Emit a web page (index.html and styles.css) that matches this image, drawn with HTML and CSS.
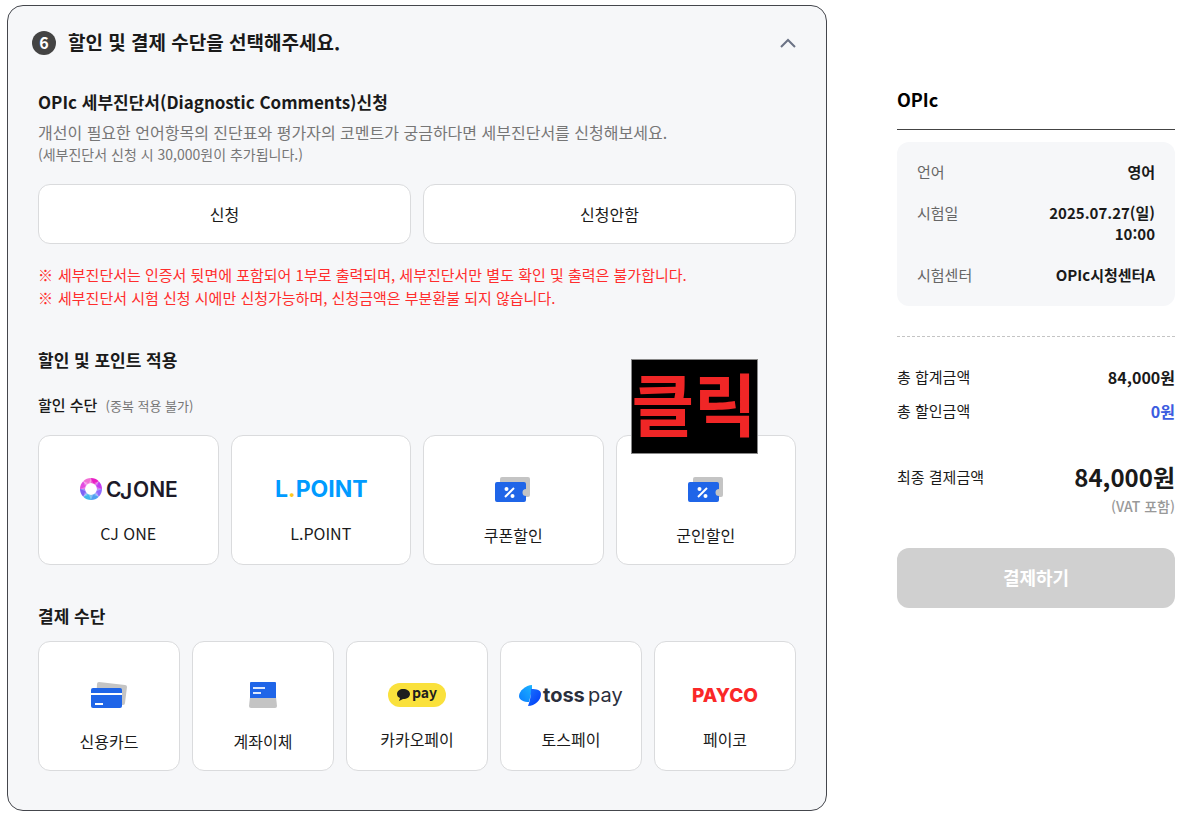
FILE: index.html
```html
<!DOCTYPE html>
<html lang="ko">
<head>
<meta charset="utf-8">
<meta name="viewport" content="width=device-width, initial-scale=1">
<title>할인 및 결제 수단</title>
<link rel="stylesheet" href="styles.css">
</head>
<body>
<div class="page">
  <main class="step">
    <header class="step-head">
      <span class="step-no">6</span>
      <h1 class="step-title">할인 및 결제 수단을 선택해주세요.</h1>
      <button class="toggle" type="button" aria-label="접기">
        <svg width="16" height="10" viewBox="0 0 16 10" fill="none" stroke="#6b7385" stroke-width="2"><path d="M1 9l7-7 7 7"/></svg>
      </button>
    </header>

    <section class="report">
      <h2 class="title">OPIc 세부진단서(Diagnostic Comments)신청</h2>
      <p class="desc">개선이 필요한 언어항목의 진단표와 평가자의 코멘트가 궁금하다면 세부진단서를 신청해보세요.</p>
      <p class="hint">(세부진단서 신청 시 30,000원이 추가됩니다.)</p>
      <div class="choices">
        <button class="choice" type="button">신청</button>
        <button class="choice" type="button">신청안함</button>
      </div>
      <ul class="notes">
        <li>세부진단서는 인증서 뒷면에 포함되어 1부로 출력되며, 세부진단서만 별도 확인 및 출력은 불가합니다.</li>
        <li>세부진단서 시험 신청 시에만 신청가능하며, 신청금액은 부분환불 되지 않습니다.</li>
      </ul>
    </section>

    <section class="discount">
      <h2 class="title">할인 및 포인트 적용</h2>
      <h3 class="subtitle">할인 수단 <small class="sub-note">(중복 적용 불가)</small></h3>
      <div class="tiles tiles-four">
        <button class="tile" type="button">
          <svg class="logo" width="98" height="28" viewBox="0 0 98 28">
            <g fill="none" stroke-width="5">
              <path stroke="#e91ec4" d="M12 5.500a8.500 8.500 0 0 1 6 2.500"/>
              <path stroke="#c33af0" d="M18 8a8.500 8.500 0 0 1 2.500 6"/>
              <path stroke="#8f6bff" d="M20.500 14a8.500 8.500 0 0 1-2.500 6"/>
              <path stroke="#4fa0f0" d="M18 20a8.500 8.500 0 0 1-6 2.500"/>
              <path stroke="#42b8ea" d="M12 22.500a8.500 8.500 0 0 1-6-2.500"/>
              <path stroke="#7b62f5" d="M6 20a8.500 8.500 0 0 1-2.500-6"/>
              <path stroke="#e34be0" d="M3.500 14a8.500 8.500 0 0 1 2.500-6"/>
              <path stroke="#f26fd6" d="M6 8a8.500 8.500 0 0 1 6-2.500"/>
            </g>
            <g fill="#fff" opacity=".3"><path d="M12 3l2 5h-4zM23 14l-5 2v-4zM12 25l-2-5h4zM1 14l5-2v4zM4 6l5 2-3 3zM20 6l-2 5-3-3zM20 22l-5-2 3-3zM4 22l2-5 3 3z"/></g>
            <text class="cjone" x="27" y="22">C</text><text class="cjone" x="41" y="24">J</text><text class="cjone" x="54" y="22">ONE</text>
          </svg>
          <span class="tile-label">CJ ONE</span>
        </button>
        <button class="tile" type="button">
          <svg class="logo" width="92" height="28" viewBox="0 0 92 28">
            <text class="lpoint" x="0" y="22">L<tspan fill="#ffc81e">.</tspan>POINT</text>
          </svg>
          <span class="tile-label">L.POINT</span>
        </button>
        <button class="tile" type="button">
          <svg class="logo icon" width="36" height="32" viewBox="0 0 36 32">
            <path fill="#c4c4c4" d="M7 4h26q2 0 2 2v16q0 2-2 2H5V6q0-2 2-2z"/>
            <path fill="#1f65e8" d="M2 9h27q2 0 2 2v5a3.500 3.500 0 0 0 0 7v4q0 2-2 2H2q-2 0-2-2V11q0-2 2-2z"/>
            <path stroke="#fff" stroke-width="2" d="M10 24l9-9"/><circle cx="11.500" cy="16" r="2" fill="#fff"/><circle cx="17.500" cy="23" r="2" fill="#fff"/>
          </svg>
          <span class="tile-label">쿠폰할인</span>
        </button>
        <div class="tile-wrap">
          <button class="tile" type="button">
            <svg class="logo icon" width="36" height="32" viewBox="0 0 36 32">
              <path fill="#c4c4c4" d="M7 4h26q2 0 2 2v16q0 2-2 2H5V6q0-2 2-2z"/>
              <path fill="#1f65e8" d="M2 9h27q2 0 2 2v5a3.500 3.500 0 0 0 0 7v4q0 2-2 2H2q-2 0-2-2V11q0-2 2-2z"/>
              <path stroke="#fff" stroke-width="2" d="M10 24l9-9"/><circle cx="11.500" cy="16" r="2" fill="#fff"/><circle cx="17.500" cy="23" r="2" fill="#fff"/>
            </svg>
            <span class="tile-label">군인할인</span>
          </button>
          <span class="callout">클릭</span>
        </div>
      </div>
    </section>

    <section class="payment">
      <h2 class="title">결제 수단</h2>
      <div class="tiles tiles-five">
        <button class="tile" type="button">
          <svg class="logo icon" width="36" height="32" viewBox="0 0 36 32">
            <path fill="#c4c4c4" d="M8 3l26 3q2 0 2 2l-2 16q0 2-2 2L5 23 6 5q0-2 2-2z"/>
            <rect y="9" width="31" height="20" rx="2" fill="#1f65e8"/>
            <path fill="#fff" d="M0 14h31v2H0zM4 24h8v2H4z"/>
          </svg>
          <span class="tile-label">신용카드</span>
        </button>
        <button class="tile" type="button">
          <svg class="logo icon" width="30" height="32" viewBox="0 0 30 32">
            <path fill="#c4c4c4" d="M2 18h26l1 9q0 2-2 2H3q-2 0-2-2z"/>
            <path fill="#1f65e8" d="M3 3h24q1 0 1 1v15H2V4q0-1 1-1z"/>
            <path fill="#fff" opacity=".85" d="M5 8h12v2H5zM5 13h8v2H5z"/>
          </svg>
          <span class="tile-label">계좌이체</span>
        </button>
        <button class="tile" type="button">
          <svg class="logo" width="58" height="28" viewBox="0 0 58 28">
            <rect x="0" y="2" width="58" height="24" rx="12" fill="#fae13c"/>
            <path fill="#1e1e1e" d="M15 8c4 0 7 2 7 5s-3 5-7 5l-4 2 1-3c-2-1-3-2-3-4 0-3 3-5 6-5z"/>
            <text class="kakao" x="24" y="17">pay</text>
          </svg>
          <span class="tile-label">카카오페이</span>
        </button>
        <button class="tile" type="button">
          <svg class="logo" width="106" height="28" viewBox="0 0 106 28">
            <defs>
              <linearGradient id="ta" x1="0" y1="1" x2="1" y2="0"><stop offset="0" stop-color="#0a7cff"/><stop offset="1" stop-color="#1cb4ff"/></linearGradient>
              <linearGradient id="tb" x1="0" y1="0" x2="1" y2="1"><stop offset="0" stop-color="#1a73ff"/><stop offset="1" stop-color="#0038f5"/></linearGradient>
            </defs>
            <path fill="url(#ta)" d="M14 4v5L11 21C6 21 1 19 1 15 1 10 8 4 14 4z"/>
            <path fill="url(#tb)" d="M13 8c6 0 10 1 10 5 0 6-6 12-13 12 2-5 3-11 3-17z"/>
            <text class="toss" x="25" y="21">toss</text><text class="toss-pay" x="70" y="21">pay</text>
          </svg>
          <span class="tile-label">토스페이</span>
        </button>
        <button class="tile" type="button">
          <svg class="logo" width="66" height="28" viewBox="0 0 66 28">
            <text class="payco" x="0" y="21">PAYCO</text>
          </svg>
          <span class="tile-label">페이코</span>
        </button>
      </div>
    </section>
  </main>

  <aside class="summary">
    <h2 class="summary-title">OPIc</h2>
    <dl class="info">
      <div class="row"><dt>언어</dt><dd>영어</dd></div>
      <div class="row"><dt>시험일</dt><dd>2025.07.27(일)<br>10:00</dd></div>
      <div class="row"><dt>시험센터</dt><dd>OPIc시청센터A</dd></div>
    </dl>
    <dl class="amounts">
      <div class="row"><dt>총 합계금액</dt><dd>84,000원</dd></div>
      <div class="row"><dt>총 할인금액</dt><dd class="sale">0원</dd></div>
      <div class="row final"><dt>최종 결제금액</dt><dd><strong class="total">84,000원</strong><span class="vat">(VAT 포함)</span></dd></div>
    </dl>
    <button class="pay" type="button">결제하기</button>
  </aside>
</div>
</body>
</html>
```

FILE: styles.css
```css
* { box-sizing: border-box; margin: 0; padding: 0; }

body {
  background: #fff;
  color: #1a1a1a;
  font-family: "Noto Sans CJK KR", sans-serif;
  font-size: 16px;
  line-height: 24px;
}

button { font: inherit; color: inherit; cursor: pointer; }
ul { list-style: none; }

.page {
  display: flex;
  align-items: flex-start;
  gap: 70px;
  padding: 5px 28px 8px 7px;
}

.step {
  flex: 1;
  min-width: 0;
  padding: 22px 30px 39px;
  background: #f6f7f9;
  border: 1px solid #44464c;
  border-radius: 16px;
}

.step-head {
  display: flex;
  align-items: center;
  margin-left: -6px;
  height: 30px;
}

.step-no {
  width: 24px;
  height: 24px;
  border-radius: 50%;
  background: #444;
  color: #fff;
  font-size: 16px;
  font-weight: 700;
  line-height: 22px;
  text-align: center;
}

.step-title {
  flex: 1;
  margin-left: 12px;
  padding-bottom: 2px;
  font-size: 19px;
  font-weight: 700;
  line-height: 28px;
}

.toggle {
  display: flex;
  padding: 8px 0;
  border: 0;
  background: none;
}

.title { font-size: 17px; font-weight: 700; line-height: 26px; }

.report { margin-top: 31px; }
.desc { margin-top: 5px; color: #767676; line-height: 24px; }
.hint { color: #767676; font-size: 14px; line-height: 20px; }

.choices {
  display: grid;
  grid-template-columns: 1fr 1fr;
  gap: 12px;
  margin-top: 20px;
}

.choice {
  height: 60px;
  border: 1px solid #dadbdd;
  border-radius: 12px;
  background: #fff;
}

.notes { margin-top: 19px; color: #ff2d2d; font-size: 15px; line-height: 23px; }
.notes li { display: flex; gap: 5px; }
.notes li::before { content: "※"; }

.discount { margin-top: 38px; }
.subtitle { margin-top: 20px; font-size: 15px; font-weight: 500; line-height: 24px; }
.sub-note { margin-left: 4px; color: #767676; font-size: 13px; font-weight: 400; }

.tiles { display: grid; gap: 12px; }
.tiles-four { grid-template-columns: repeat(4, 1fr); margin-top: 17px; }
.tiles-five { grid-template-columns: repeat(5, 1fr); margin-top: 12px; }
.tile-wrap { position: relative; display: grid; }

.tile {
  display: flex;
  flex-direction: column;
  align-items: center;
  justify-content: center;
  gap: 18px;
  height: 130px;
  padding-top: 20px;
  border: 1px solid #dadbdd;
  border-radius: 12px;
  background: #fff;
}

.logo { display: block; overflow: visible; }
.tile-label { line-height: 24px; }

.callout {
  position: absolute;
  top: -76px;
  left: 15px;
  padding-bottom: 10px;
  border: 1px solid #888;
  background: #000;
  color: #f02626;
  font-size: 68px;
  font-weight: 700;
  line-height: 83px;
}

.payment { margin-top: 38px; }

.cjone { font: 600 21px Inter, sans-serif; fill: #1c1a28; }
.lpoint { font: 700 23px Inter, sans-serif; fill: #009bff; }
.kakao { font: 700 14px "Noto Sans CJK KR", sans-serif; fill: #1e1e1e; }
.toss { font: 700 20px Inter, sans-serif; fill: #2b2f3c; }
.toss-pay { font: 400 20px Inter, sans-serif; fill: #2b2f3c; }
.payco { font: 800 19px Inter, sans-serif; fill: #fa2828; }

.summary { flex: 0 0 278px; padding-top: 81px; }

.summary-title {
  padding-bottom: 17px;
  border-bottom: 1px solid #444;
  color: #000;
  font-size: 18px;
  font-weight: 700;
  line-height: 26px;
}

.row { display: flex; justify-content: space-between; }
.row dd { font-weight: 700; text-align: right; }

.info {
  display: grid;
  gap: 20px;
  margin-top: 12px;
  padding: 19px 20px 21px;
  border-radius: 12px;
  background: #f6f7f9;
  font-size: 15px;
  line-height: 21px;
}
.info dt { color: #666; }

.amounts {
  display: grid;
  gap: 12px;
  margin-top: 30px;
  padding-top: 29px;
  border-top: 1px dashed #c4c4c4;
  font-size: 15px;
  line-height: 22px;
}
.amounts dd { font-size: 16px; }
.amounts .sale { color: #3c5ce0; }
.final { margin-top: 26px; }
.final dt { padding-top: 6px; }
.total { display: block; font-size: 24px; font-weight: 700; line-height: 34px; }
.vat { display: block; color: #999; font-size: 14px; font-weight: 500; line-height: 24px; }

.pay {
  display: block;
  width: 100%;
  height: 60px;
  margin-top: 30px;
  padding-bottom: 2px;
  border: 0;
  border-radius: 12px;
  background: #d0d0d0;
  color: #fff;
  font-size: 18px;
  font-weight: 700;
}
```
